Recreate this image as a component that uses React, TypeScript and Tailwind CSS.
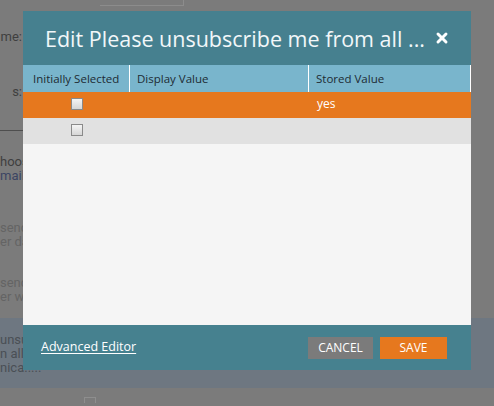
import { X } from "lucide-react";

function Checkbox() {
  return (
    <span className="block w-[12px] h-[12px] border border-[#8a8a8a] bg-gradient-to-b from-[#f4f4f4] to-[#d6d6d6]" />
  );
}

const rows = [
  { stored: "yes", selected: true },
  { stored: "", selected: false },
];

export default function App() {
  return (
    <div
      className="relative w-[494px] h-[406px] overflow-hidden bg-[#7b7b7b]"
      style={{ fontFamily: '"Roboto", "Liberation Sans", sans-serif' }}
    >
      {/* page behind the overlay */}
      <div className="flex flex-col text-[13px] leading-[14px] text-[#3f3f3f]">
        <div className="flex h-[6px]">
          <div className="ml-[100px] w-[84px] border-r border-b border-[#8c8c8c]" />
        </div>
        <div className="w-[22px] mt-[24px] flex justify-end whitespace-nowrap">me:</div>
        <div className="w-[22px] mt-[41px] flex justify-end whitespace-nowrap">s:</div>
        <div className="w-[24px] mt-[31px] border-b border-[#4e4e4e]" />
        <div className="mt-[24px] flex flex-col whitespace-nowrap">
          <span>hoos</span>
          <span className="text-[#3b4563]">mail</span>
        </div>
        <div className="mt-[38px] flex flex-col whitespace-nowrap text-[#646464]">
          <span>send</span>
          <span>er da</span>
        </div>
        <div className="mt-[27px] flex flex-col whitespace-nowrap text-[#646464]">
          <span>send</span>
          <span>er w</span>
        </div>
        <div className="mt-[14px] h-[70px] bg-[#6e7781] pt-[15px] flex flex-col whitespace-nowrap text-[#4a4f55]">
          <span>unsu</span>
          <span>n all</span>
          <span>nica.....</span>
        </div>
        <div className="flex mt-[9px]">
          <div className="ml-[84px] w-[12px] h-[6px] border border-b-0 border-[#8e8e8e]" />
        </div>
      </div>

      {/* modal */}
      <div
        className="absolute left-[23px] top-[11px] w-[448px] flex flex-col"
        style={{ fontFamily: '"Open Sans", "Liberation Sans", sans-serif' }}
      >
        <div className="h-[54px] bg-[#46808f] flex items-center pl-[22px] pr-[21px]">
          <h1 className="text-[21.5px] leading-none text-[#f2f7f9] whitespace-nowrap pt-[2px]">
            Edit Please unsubscribe me from all ...
          </h1>
          <X className="ml-auto text-white" size={16} strokeWidth={4.4} />
        </div>

        <div className="flex h-[27px] bg-[#79b5cc] text-[11.5px] text-[#1d2b33] border-r border-white">
          <div className="w-[107px] flex items-center pl-[10px] border-r border-white">
            Initially Selected
          </div>
          <div className="w-[179px] flex items-center pl-[7px] border-r border-white">
            Display Value
          </div>
          <div className="flex-1 flex items-center pl-[7px]">Stored Value</div>
        </div>

        {rows.map((row, i) => (
          <div
            key={i}
            className={`flex h-[26px] text-[12px] ${
              row.selected ? "bg-[#e6781e] text-white" : "bg-[#e1e1e1]"
            }`}
          >
            <div className="w-[107px] flex items-center justify-center pb-[2px]">
              <Checkbox />
            </div>
            <div className="w-[179px]" />
            <div className="flex-1 flex items-center pl-[8px] pb-[2px]">{row.stored}</div>
          </div>
        ))}

        <div className="h-[181px] bg-[#f5f5f5]" />

        <div className="h-[45px] bg-[#46818f] flex items-center pl-[18px] pr-[24px]">
          <a className="text-[12.5px] text-white underline underline-offset-2 cursor-pointer">
            Advanced Editor
          </a>
          <div className="ml-auto flex gap-[7px]">
            <button className="w-[65px] h-[22px] bg-[#7b7b7b] text-white text-[12px] uppercase">
              Cancel
            </button>
            <button className="w-[67px] h-[22px] bg-[#e6781e] text-white text-[12px] uppercase">
              Save
            </button>
          </div>
        </div>
      </div>
    </div>
  );
}
